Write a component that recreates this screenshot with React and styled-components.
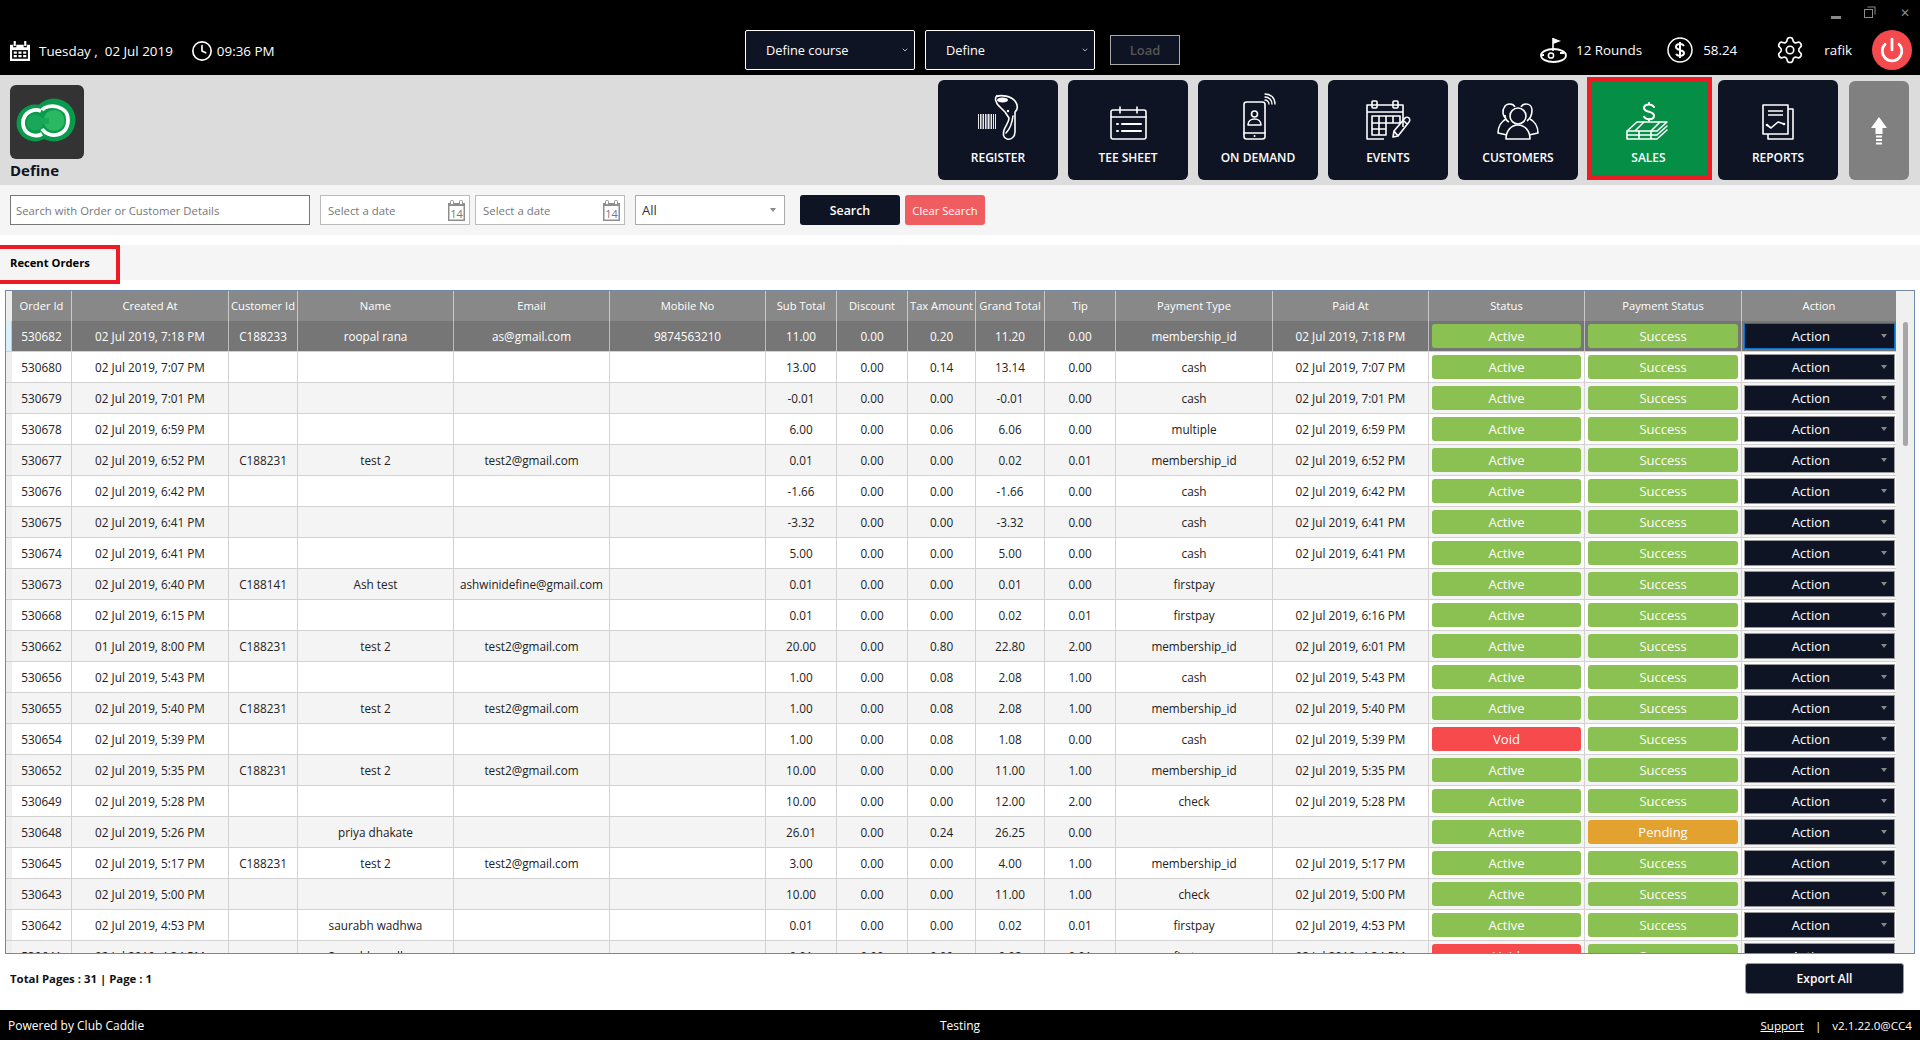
import React from "react";
import styled, { createGlobalStyle } from "styled-components";
import { Clock, Settings, Power, ChevronDown } from "lucide-react";

const NAVY = "#0e1424";
const FONT = `"Open Sans", "Noto Sans", sans-serif`;
const COLS = "6px 60px 157px 69px 156px 156px 156px 71px 71px 68px 69px 71px 157px 156px 156px 157px 154px";

const GlobalStyle = createGlobalStyle`
  html, body { margin: 0; padding: 0; background: #fff; }
  body { font-family: ${FONT}; }
  * { box-sizing: border-box; }
`;

const HEADERS = ["Order Id", "Created At", "Customer Id", "Name", "Email", "Mobile No", "Sub Total", "Discount", "Tax Amount", "Grand Total", "Tip", "Payment Type", "Paid At", "Status", "Payment Status", "Action"];

const ORDERS = [
  ["530682", "02 Jul 2019, 7:18 PM", "C188233", "roopal rana", "as@gmail.com", "9874563210", "11.00", "0.00", "0.20", "11.20", "0.00", "membership_id", "02 Jul 2019, 7:18 PM"],
  ["530680", "02 Jul 2019, 7:07 PM", "", "", "", "", "13.00", "0.00", "0.14", "13.14", "0.00", "cash", "02 Jul 2019, 7:07 PM"],
  ["530679", "02 Jul 2019, 7:01 PM", "", "", "", "", "-0.01", "0.00", "0.00", "-0.01", "0.00", "cash", "02 Jul 2019, 7:01 PM"],
  ["530678", "02 Jul 2019, 6:59 PM", "", "", "", "", "6.00", "0.00", "0.06", "6.06", "0.00", "multiple", "02 Jul 2019, 6:59 PM"],
  ["530677", "02 Jul 2019, 6:52 PM", "C188231", "test 2", "test2@gmail.com", "", "0.01", "0.00", "0.00", "0.02", "0.01", "membership_id", "02 Jul 2019, 6:52 PM"],
  ["530676", "02 Jul 2019, 6:42 PM", "", "", "", "", "-1.66", "0.00", "0.00", "-1.66", "0.00", "cash", "02 Jul 2019, 6:42 PM"],
  ["530675", "02 Jul 2019, 6:41 PM", "", "", "", "", "-3.32", "0.00", "0.00", "-3.32", "0.00", "cash", "02 Jul 2019, 6:41 PM"],
  ["530674", "02 Jul 2019, 6:41 PM", "", "", "", "", "5.00", "0.00", "0.00", "5.00", "0.00", "cash", "02 Jul 2019, 6:41 PM"],
  ["530673", "02 Jul 2019, 6:40 PM", "C188141", "Ash test", "ashwinidefine@gmail.com", "", "0.01", "0.00", "0.00", "0.01", "0.00", "firstpay", ""],
  ["530668", "02 Jul 2019, 6:15 PM", "", "", "", "", "0.01", "0.00", "0.00", "0.02", "0.01", "firstpay", "02 Jul 2019, 6:16 PM"],
  ["530662", "01 Jul 2019, 8:00 PM", "C188231", "test 2", "test2@gmail.com", "", "20.00", "0.00", "0.80", "22.80", "2.00", "membership_id", "02 Jul 2019, 6:01 PM"],
  ["530656", "02 Jul 2019, 5:43 PM", "", "", "", "", "1.00", "0.00", "0.08", "2.08", "1.00", "cash", "02 Jul 2019, 5:43 PM"],
  ["530655", "02 Jul 2019, 5:40 PM", "C188231", "test 2", "test2@gmail.com", "", "1.00", "0.00", "0.08", "2.08", "1.00", "membership_id", "02 Jul 2019, 5:40 PM"],
  ["530654", "02 Jul 2019, 5:39 PM", "", "", "", "", "1.00", "0.00", "0.08", "1.08", "0.00", "cash", "02 Jul 2019, 5:39 PM", "Void"],
  ["530652", "02 Jul 2019, 5:35 PM", "C188231", "test 2", "test2@gmail.com", "", "10.00", "0.00", "0.00", "11.00", "1.00", "membership_id", "02 Jul 2019, 5:35 PM"],
  ["530649", "02 Jul 2019, 5:28 PM", "", "", "", "", "10.00", "0.00", "0.00", "12.00", "2.00", "check", "02 Jul 2019, 5:28 PM"],
  ["530648", "02 Jul 2019, 5:26 PM", "", "priya dhakate", "", "", "26.01", "0.00", "0.24", "26.25", "0.00", "", "", "Active", "Pending"],
  ["530645", "02 Jul 2019, 5:17 PM", "C188231", "test 2", "test2@gmail.com", "", "3.00", "0.00", "0.00", "4.00", "1.00", "membership_id", "02 Jul 2019, 5:17 PM"],
  ["530643", "02 Jul 2019, 5:00 PM", "", "", "", "", "10.00", "0.00", "0.00", "11.00", "1.00", "check", "02 Jul 2019, 5:00 PM"],
  ["530642", "02 Jul 2019, 4:53 PM", "", "saurabh wadhwa", "", "", "0.01", "0.00", "0.00", "0.02", "0.01", "firstpay", "02 Jul 2019, 4:53 PM"],
  ["530641", "02 Jul 2019, 4:34 PM", "", "Saurabh wadhwa", "", "", "0.01", "0.00", "0.00", "0.02", "0.01", "firstpay", "02 Jul 2019, 4:34 PM", "Void"],
];

const PILL_COLORS = { Active: "#8bc152", Success: "#8bc152", Void: "#f64a4d", Pending: "#e3a12f" };

// drawn icons
const line = { fill: "none", stroke: "#fff", strokeWidth: 1.6, strokeLinecap: "round", strokeLinejoin: "round" };

const RegisterIcon = () => (
  <svg width="60" height="50" viewBox="0 0 60 50">
    {[10, 12, 13.5, 15, 17, 18.5, 20, 21.5, 23, 25, 27].map((x) => (
      <rect key={x} x={x} y="22" width="0.9" height="15" fill="#fff" />
    ))}
    <path {...line} d="M29 4.500C33 2.500 43 4 47 9c3 4 3 8 0 11l0 20c0 5-4 8-8 7-4-1-4-5-3-9 2-5 5-8 5-12l-4-6-5-5c-4-3-6-9-3-11.500z" />
    <ellipse cx="34.500" cy="8" rx="5.500" ry="2.500" fill="#fff" />
    <circle cx="40" cy="19" r="1.200" fill="#fff" />
    <path {...line} d="M45 24c-1 8-4 14-7 17" />
  </svg>
);

const TeeSheetIcon = () => (
  <svg width="60" height="50" viewBox="0 0 60 50">
    <rect {...line} x="13" y="18" width="35" height="29" rx="2" />
    <path {...line} d="M13 25h35M22 15v6M39 15v6" />
    <path {...line} strokeWidth="2" d="M24 32h19M24 39h19M19 32h1M19 39h1" />
  </svg>
);

const OnDemandIcon = () => (
  <svg width="60" height="50" viewBox="0 0 60 50">
    <rect {...line} x="16" y="10" width="21" height="37" rx="2.500" />
    <path {...line} d="M16 41h21" />
    <circle cx="26.500" cy="44" r="1" fill="#fff" />
    <circle {...line} cx="26.500" cy="22" r="3" />
    <path {...line} d="M20 33c0-4 3-6 6.500-6s6.500 2 6.500 6z" />
    <path {...line} strokeWidth="1.300" d="M37 8c2 0 4 2 4 4M37 5c4 0 7 3 7 7M37 2c6 0 10 4 10 10" />
  </svg>
);

const EventsIcon = () => (
  <svg width="60" height="50" viewBox="0 0 60 50">
    <path {...line} strokeLinecap="butt" d="M26 47H9V13h36v22M9 20h36" />
    <rect {...line} x="14" y="9" width="5" height="7" rx="1" />
    <rect {...line} x="35" y="9" width="5" height="7" rx="1" />
    <path {...line} strokeLinecap="butt" d="M14 43V24h28v7H28v12zM21 24v19M28 24v7M35 24v7M14 31h14M14 37h14" />
    <path {...line} d="M35 45l1-6 11-13c1-1 3-1 4 0s1 3 0 4L40 44zM36 39l4 5M45 28l4 4" />
  </svg>
);

const CustomersIcon = () => (
  <svg width="60" height="50" viewBox="0 0 60 50">
    <path {...line} strokeLinecap="butt" d="M21 30c-2-1-4-4-4-7M16 16c1-3 3-4 6-4 2 0 4 1 5 3M33 15c1-2 3-3 5-3 3 0 6 2 6 6 0 3-1 8-5 11M16 16c-1 1-1 3-1 5 0 2 1 4 3 6" />
    <circle {...line} cx="30" cy="24" r="8" />
    <path {...line} strokeLinecap="butt" d="M18 27c-4 2-8 7-8 14l9 2M42 27c4 2 8 7 8 14l-9 2" />
    <path {...line} d="M18 47c0-8 5-14 12-14s12 6 12 14z" />
  </svg>
);

const SalesIcon = () => (
  <svg width="60" height="50" viewBox="0 0 60 50">
    <path {...line} strokeWidth="2" d="M35 15c-1-1.500-3-2.500-5-2.500-3 0-5 1-5 3.500s2 3 5 3.800 5 1.700 5 4-2 3.500-5 3.500-4-1-5-2.500M30 11v1.500M30 27v1.500" />
    <path {...line} d="M18 30h30l-10 9H8zM25 30l-9 9M41 30l-9 9M8 39v4h30l10-9M8 43v4h30l10-9M20 39v8M32 39v8M20 43h12" />
  </svg>
);

const ReportsIcon = () => (
  <svg width="60" height="50" viewBox="0 0 60 50">
    <rect {...line} strokeLinecap="butt" x="15" y="13" width="25" height="29" />
    <path {...line} strokeLinecap="butt" d="M40 17h5v30H20v-5" />
    <path {...line} strokeLinecap="butt" d="M20 19h15M20 23h15" />
    <path {...line} d="M19 33l4 3 7-6 6 2" />
    <circle cx="19" cy="33" r="1.300" fill="#fff" />
    <circle cx="36" cy="32" r="1.300" fill="#fff" />
  </svg>
);

const UpArrowIcon = () => (
  <svg width="16" height="28" viewBox="0 0 16 28">
    <path fill="#fff" d="M8 0l8 11h-4.500v6h-7v-6H0z" />
    <path fill="#fff" d="M5 18.500h6v2H5zM5 22h6v2H5zM5 25.500h6v2H5z" />
  </svg>
);

const DateIcon = () => (
  <svg width="20" height="20" viewBox="0 0 19 22" preserveAspectRatio="none">
    <path fill="#fff" d="M0 4h3v3h3V4h7v3h3V4h3v18H0z" />
    <path fill="#fff" d="M3.500 0h2v5.500h-2zM13.500 0h2v5.500h-2z" />
    <rect x="2" y="10" width="15" height="9.500" fill="#000" />
    <path fill="#fff" d="M3.500 11.500h3v2.500h-3zM8 11.500h3v2.500H8zM12.500 11.500h3v2.500h-3zM3.500 15.500h3V18h-3zM8 15.500h3V18H8zM12.500 15.500h3V18h-3z" />
  </svg>
);

const FlagIcon = () => (
  <svg width="27" height="26" viewBox="0 0 27 26">
    <path fill="none" stroke="#fff" strokeWidth="1.600" d="M13 14V1" />
    <path fill="#fff" d="M13 1l8 3-8 3z" />
    <ellipse cx="13.500" cy="18.500" rx="12.500" ry="6.500" fill="none" stroke="#fff" strokeWidth="1.800" />
    <circle cx="11" cy="18.500" r="2.600" fill="none" stroke="#fff" strokeWidth="1.500" />
    <path stroke="#fff" strokeWidth="2" d="M20 16h4M2 18h2" />
  </svg>
);

const DollarIcon = () => (
  <svg width="26" height="26" viewBox="0 0 26 26">
    <circle cx="13" cy="13" r="12" fill="none" stroke="#fff" strokeWidth="1.500" />
    <path fill="none" stroke="#fff" strokeWidth="2" d="M17 9c-.8-1.300-2.400-1.900-4-1.900-2.500 0-4 1-4 2.900s2 2.400 4 3 4 1.300 4 3.100-1.500 2.800-4 2.800c-1.700 0-3.200-.6-4-1.900M13 5v16" />
  </svg>
);

const CalendarSmall = () => (
  <svg width="19" height="21" viewBox="0 0 19 21">
    <path fill="#8d8d8d" d="M1 3h17v18H1z" />
    <rect x="2.500" y="6" width="14" height="13.500" fill="#fff" />
    <rect x="3.500" y="0.500" width="3" height="4" rx="1" fill="#fff" stroke="#8d8d8d" />
    <rect x="12.500" y="0.500" width="3" height="4" rx="1" fill="#fff" stroke="#8d8d8d" />
    <text x="9.500" y="18" textAnchor="middle" fontSize="11" fontFamily="Open Sans, sans-serif" fill="#777">14</text>
  </svg>
);

const LogoIcon = () => (
  <svg width="74" height="74" viewBox="0 0 74 74">
    <circle cx="25" cy="38" r="18.500" fill="#0a9a4d" />
    <circle cx="44" cy="35" r="21.500" fill="#0a9a4d" />
    <circle cx="25" cy="37.500" r="8" fill="#1ba75a" />
    <circle cx="44" cy="35.500" r="10.500" fill="#2bb863" />
    <path fill="#1ba75a" d="M25 33h14v6H25z" />
    <path fill="none" stroke="#fff" strokeWidth="3.800" d="M31 26C24 23 13 27 13 38s12 15 19 11" />
    <path fill="none" stroke="#fff" strokeWidth="3.800" d="M32 25c6-7 26-5 26 10 0 17-19 19-26 9" />
  </svg>
);

function App() {
  return (
    <Page>
      <GlobalStyle />
      <TopBar>
        <TopLeft>
          <DateIcon />
          <TopText $ml={9}>Tuesday ,&nbsp; 02 Jul 2019</TopText>
          <Clock size={22} color="#fff" strokeWidth={1.800} style={{ marginLeft: 18 }} />
          <TopText $ml={4}>09:36 PM</TopText>
        </TopLeft>
        <TopCenter>
          <CourseSelect>Define course<ChevronDown size={8} /></CourseSelect>
          <CourseSelect>Define<ChevronDown size={8} /></CourseSelect>
          <LoadButton>Load</LoadButton>
        </TopCenter>
        <TopRight>
          <FlagIcon />
          <TopText $ml={9}>12 Rounds</TopText>
          <IconSlot $ml={25}><DollarIcon /></IconSlot>
          <TopText $ml={10}>58.24</TopText>
          <IconSlot $ml={38}><Settings size={30} color="#fff" strokeWidth={1.300} /></IconSlot>
          <TopText $ml={19}>rafik</TopText>
          <PowerButton><Power size={26} color="#fff" strokeWidth={2.500} /></PowerButton>
        </TopRight>
        <WindowControls>
          <MinimizeMark />
          <RestoreMark />
          <CloseMark>✕</CloseMark>
        </WindowControls>
      </TopBar>

      <NavBand>
        <Brand>
          <LogoBox><LogoIcon /></LogoBox>
          <BrandName>Define</BrandName>
        </Brand>
        <NavList>
          <NavButton><RegisterIcon /><NavLabel>REGISTER</NavLabel></NavButton>
          <NavButton><TeeSheetIcon /><NavLabel>TEE SHEET</NavLabel></NavButton>
          <NavButton><OnDemandIcon /><NavLabel>ON DEMAND</NavLabel></NavButton>
          <NavButton><EventsIcon /><NavLabel>EVENTS</NavLabel></NavButton>
          <NavButton><CustomersIcon /><NavLabel>CUSTOMERS</NavLabel></NavButton>
          <SalesButton><SalesIcon /><NavLabel>SALES</NavLabel></SalesButton>
          <NavButton><ReportsIcon /><NavLabel>REPORTS</NavLabel></NavButton>
          <UpButton><UpArrowIcon /></UpButton>
        </NavList>
      </NavBand>

      <FilterBar>
        <SearchInput placeholder="Search with Order or Customer Details" readOnly />
        <DateField $ml={10}>Select a date<CalendarSmall /></DateField>
        <DateField $ml={5}>Select a date<CalendarSmall /></DateField>
        <AllSelect>All<SmallCaret /></AllSelect>
        <SearchButton>Search</SearchButton>
        <ClearButton>Clear Search</ClearButton>
      </FilterBar>

      <RecentBand>
        <RecentTab>Recent Orders</RecentTab>
      </RecentBand>

      <TableFrame>
        <TableBody>
          <HeadRow>
            <HeadGutter />
            {HEADERS.map((h) => <HeadCell key={h}>{h}</HeadCell>)}
          </HeadRow>
          {ORDERS.map((o, i) => {
            const cells = o.slice(0, 13);
            const status = o[13] || "Active";
            const payment = o[14] || "Success";
            return (
              <Row key={o[0]} $selected={i === 0} $alt={i % 2 === 0}>
                <Gutter $selected={i === 0} />
                {cells.map((c, j) => <Cell key={j} $selected={i === 0}>{c}</Cell>)}
                <Cell $selected={i === 0}><Pill $color={PILL_COLORS[status]}>{status}</Pill></Cell>
                <Cell $selected={i === 0}><Pill $color={PILL_COLORS[payment]}>{payment}</Pill></Cell>
                <Cell $selected={i === 0}><ActionSelect $focus={i === 0}>Action<SmallCaret /></ActionSelect></Cell>
              </Row>
            );
          })}
        </TableBody>
        <Scrollbar><ScrollThumb /></Scrollbar>
      </TableFrame>

      <BottomBar>
        <PageInfo>Total Pages : 31 | Page : 1</PageInfo>
        <ExportButton>Export All</ExportButton>
      </BottomBar>

      <Footer>
        <FootLeft>Powered by Club Caddie</FootLeft>
        <FootCenter>Testing</FootCenter>
        <FootRight><SupportLink>Support</SupportLink><span>|</span><span>v2.1.22.0@CC4</span></FootRight>
      </Footer>
    </Page>
  );
}

const Page = styled.div`
  width: 1920px;
  height: 1040px;
  display: flex;
  flex-direction: column;
  overflow: hidden;
  color: #222;
`;

const TopBar = styled.header`
  position: relative;
  height: 75px;
  flex: none;
  background: #000;
  display: grid;
  grid-template-columns: 745px 435px 1fr;
`;

const TopLeft = styled.div`
  display: flex;
  align-items: center;
  padding: 26px 0 0 10px;
`;

const TopText = styled.span`
  color: #fff;
  font-size: 13.400px;
  margin-left: ${({ $ml }) => $ml || 0}px;
  white-space: nowrap;
`;

const TopCenter = styled.div`
  display: flex;
  align-items: center;
  padding-top: 25px;
`;

const CourseSelect = styled.div`
  width: 170px;
  height: 40px;
  margin-right: 10px;
  padding: 0 5px 0 20px;
  display: flex;
  align-items: center;
  justify-content: space-between;
  background: ${NAVY};
  border: 1px solid #fff;
  border-radius: 2px;
  color: #fff;
  font-size: 12.800px;
`;

const LoadButton = styled.div`
  width: 70px;
  height: 30px;
  margin-left: 5px;
  display: flex;
  align-items: center;
  justify-content: center;
  background: ${NAVY};
  border: 1px solid #aaa;
  color: #555;
  font-size: 13px;
  font-weight: 600;
`;

const TopRight = styled.div`
  display: flex;
  align-items: center;
  padding: 25px 0 0 360px;
`;

const IconSlot = styled.span`
  display: flex;
  margin-left: ${({ $ml }) => $ml || 0}px;
`;

const PowerButton = styled.div`
  width: 40px;
  height: 40px;
  margin-left: 20px;
  flex: none;
  border-radius: 50%;
  background: #f44a4e;
  display: flex;
  align-items: center;
  justify-content: center;
`;

const WindowControls = styled.div`
  position: absolute;
  top: 6px;
  right: 10px;
  display: flex;
  align-items: center;
  gap: 23px;
`;

const MinimizeMark = styled.span`
  width: 10px;
  height: 3px;
  margin-top: 8px;
  background: #8a8a8a;
`;

const RestoreMark = styled.span`
  width: 9px;
  height: 9px;
  border: 1.500px solid #8a8a8a;
  box-shadow: 2px -2px 0 -0.500px #000, 3px -3px 0 -0.500px #8a8a8a;
`;

const CloseMark = styled.span`
  margin-left: 4px;
  color: #8a8a8a;
  font-size: 12px;
  font-weight: 700;
  font-family: "DejaVu Sans", sans-serif;
  line-height: 14px;
`;

const NavBand = styled.section`
  height: 110px;
  flex: none;
  background: #dcdcdc;
  display: flex;
  justify-content: space-between;
`;

const Brand = styled.div`
  padding: 10px 0 0 10px;
`;

const LogoBox = styled.div`
  width: 74px;
  height: 74px;
  border-radius: 6px;
  background: #333;
`;

const BrandName = styled.div`
  font-size: 15px;
  line-height: 22px;
  font-weight: 700;
  color: ${NAVY};
`;

const NavList = styled.nav`
  display: flex;
  padding: 5px 11px 5px 0;
  gap: 10px;
`;

const NavButton = styled.div`
  width: 120px;
  height: 100px;
  padding-top: 12px;
  display: flex;
  flex-direction: column;
  align-items: center;
  background: ${NAVY};
  border-radius: 6px;
`;

const SalesButton = styled(NavButton)`
  width: 125px;
  height: 103px;
  margin: -3px -4px 0 -1px;
  padding: 10px 2px 0 0;
  background: #048e46;
  border: 5px solid #ed1c24;
  border-radius: 0;
`;

const NavLabel = styled.span`
  margin-top: 6px;
  color: #fff;
  font-size: 12px;
  line-height: 20px;
  font-weight: 600;
`;

const UpButton = styled.div`
  width: 60px;
  height: 99px;
  margin: 1px 0 0 1px;
  border-radius: 6px;
  background: #808080;
  display: flex;
  align-items: center;
  justify-content: center;
`;

const FilterBar = styled.section`
  height: 50px;
  flex: none;
  background: #f5f5f5;
  display: flex;
  align-items: center;
  padding-left: 10px;
`;

const SearchInput = styled.input`
  width: 300px;
  height: 30px;
  padding: 0 5px;
  background: #fff;
  border: 1px solid #777;
  font-family: ${FONT};
  font-size: 11.300px;
  outline: none;
  &::placeholder { color: #777; }
`;

const DateField = styled.div`
  width: 150px;
  height: 30px;
  margin-left: ${({ $ml }) => $ml}px;
  padding: 0 3px 0 7px;
  display: flex;
  align-items: center;
  justify-content: space-between;
  background: #fff;
  border: 1px solid #bbb;
  color: #777;
  font-size: 11.400px;
`;

const AllSelect = styled.div`
  width: 150px;
  height: 30px;
  margin-left: 10px;
  padding: 0 8px 0 6px;
  display: flex;
  align-items: center;
  justify-content: space-between;
  background: #fff;
  border: 1px solid #aaa;
  font-size: 13px;
  color: #333;
`;

const SmallCaret = styled.i`
  width: 0;
  height: 0;
  border-left: 3px solid transparent;
  border-right: 3px solid transparent;
  border-top: 4px solid #888;
`;

const SearchButton = styled.div`
  width: 100px;
  height: 30px;
  margin-left: 15px;
  display: flex;
  align-items: center;
  justify-content: center;
  background: ${NAVY};
  border-radius: 3px;
  color: #fff;
  font-size: 12.400px;
  font-weight: 600;
`;

const ClearButton = styled.div`
  width: 80px;
  height: 30px;
  margin-left: 5px;
  display: flex;
  align-items: center;
  justify-content: center;
  background: #f05d61;
  border-radius: 3px;
  color: #fff;
  font-size: 11.200px;
`;

const RecentBand = styled.section`
  height: 35px;
  flex: none;
  margin-top: 10px;
  background: #f5f5f5;
`;

const RecentTab = styled.div`
  width: 120px;
  height: 39px;
  padding: 0 0 4px 10px;
  display: flex;
  align-items: center;
  border: 4px solid #ed1c24;
  border-left: none;
  font-size: 11.200px;
  font-weight: 700;
  color: #000;
  white-space: nowrap;
`;

const TableFrame = styled.section`
  width: 1910px;
  height: 664px;
  flex: none;
  margin: 10px 0 0 5px;
  display: flex;
  overflow: hidden;
  border: 1px solid #7089ab;
`;

const TableBody = styled.div`
  width: 1890px;
  flex: none;
`;

const HeadRow = styled.div`
  height: 30px;
  display: grid;
  grid-template-columns: ${COLS};
  background: #888;
`;

const HeadGutter = styled.div`
  background: #eee;
`;

const HeadCell = styled.div`
  display: flex;
  align-items: center;
  justify-content: center;
  padding-bottom: 1px;
  border-right: 1px solid #c8c8c8;
  color: #fff;
  font-size: 11.200px;
  white-space: nowrap;
  &:last-child { border-right: none; }
`;

const Row = styled.div`
  height: 31px;
  display: grid;
  grid-template-columns: ${COLS};
  background: ${({ $selected, $alt }) => ($selected ? "#767676" : $alt ? "#f4f4f4" : "#fff")};
  color: ${({ $selected }) => ($selected ? "#fff" : "#222")};
  border-bottom: 1px solid #d2d2d2;
`;

const Gutter = styled.div`
  background: ${({ $selected }) => ($selected ? "#d9f0fb" : "#eee")};
  border-right: 1px solid ${({ $selected }) => ($selected ? "#9ed4f0" : "#eee")};
`;

const Cell = styled.div`
  display: flex;
  align-items: center;
  justify-content: center;
  padding: 0 3px 1px;
  border-right: 1px solid ${({ $selected }) => ($selected ? "#bbb" : "#d2d2d2")};
  font-size: 11.750px;
  white-space: nowrap;
  min-width: 0;
  &:last-child { border-right: none; padding: 0 1px 0 2px; }
`;

const Pill = styled.div`
  width: 100%;
  height: 24px;
  display: flex;
  align-items: center;
  justify-content: center;
  border-radius: 3px;
  background: ${({ $color }) => $color};
  color: #fff;
  font-size: 13px;
`;

const ActionSelect = styled.div`
  width: 100%;
  height: 26px;
  padding: 0 7px 0 0;
  display: flex;
  align-items: center;
  justify-content: flex-end;
  background: ${NAVY};
  border: 1px solid ${({ $focus }) => ($focus ? "#0a6fc2" : "#999")};
  color: #fff;
  font-size: 13px;
  gap: 51px;
`;

const Scrollbar = styled.div`
  flex: 1;
  background: #f0f0f0;
  padding: 31px 6px 0 7px;
`;

const ScrollThumb = styled.div`
  height: 124px;
  border-radius: 3px;
  background: #a6a6a6;
`;

const BottomBar = styled.section`
  height: 56px;
  flex: none;
  display: flex;
  justify-content: space-between;
  align-items: center;
  padding: 0 16px 8px 10px;
`;

const PageInfo = styled.div`
  font-size: 11.400px;
  font-weight: 700;
  color: #111;
`;

const ExportButton = styled.div`
  width: 159px;
  height: 31px;
  display: flex;
  align-items: center;
  justify-content: center;
  background: ${NAVY};
  border: 1px solid #999;
  border-radius: 3px;
  color: #fff;
  font-size: 12px;
  font-weight: 600;
`;

const Footer = styled.footer`
  height: 30px;
  flex: none;
  background: #000;
  color: #fff;
  font-size: 12px;
  display: grid;
  grid-template-columns: 1fr auto 1fr;
  align-items: center;
  padding: 0 8px;
`;

const FootLeft = styled.div``;

const FootCenter = styled.div``;

const FootRight = styled.div`
  display: flex;
  justify-content: flex-end;
  gap: 11px;
  font-size: 11.600px;
`;

const SupportLink = styled.span`
  text-decoration: underline;
`;

export default App;
